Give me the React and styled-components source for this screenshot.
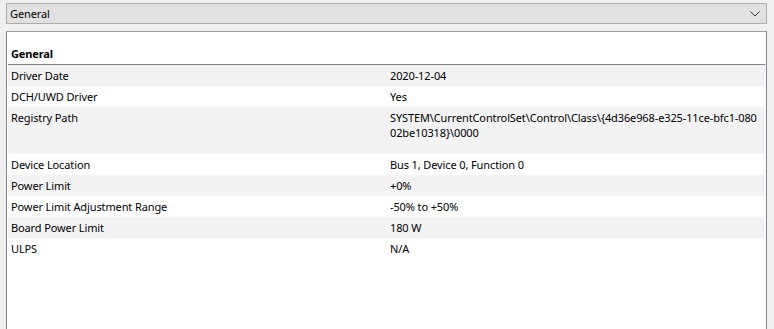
import React from 'react';
import styled, {createGlobalStyle} from 'styled-components';

const Global = createGlobalStyle`
  html, body {
    margin: 0;
    padding: 0;
    background: #f0f0f0;
    font-family: "Noto Sans", "Liberation Sans", sans-serif;
    font-size: 11px;
    letter-spacing: -0.12px;
    color: #000;
  }
`;

const Page = styled.div`
  width: 774px;
  height: 329px;
  overflow: hidden;
  padding: 3px 7px 0 6px;
  box-sizing: border-box;
  display: flex;
  flex-direction: column;
  gap: 7px;
`;

const Combo = styled.div`
  height: 21px;
  box-sizing: border-box;
  border: 1px solid #adadad;
  background: #e1e1e1;
  display: flex;
  align-items: center;
  justify-content: space-between;
  padding: 0 6px 0 3px;
`;

const Panel = styled.div`
  flex: 1;
  background: #fff;
  border: 1px solid #828790;
  border-top-color: #a0a0a0;
  border-bottom: none;
  padding: 0 1px;
`;

const Header = styled.div`
  height: 33px;
  box-sizing: border-box;
  border-bottom: 1px solid #828282;
  display: flex;
  align-items: flex-end;
  padding: 0 0 3px 3px;
  font-weight: bold;
`;

const Row = styled.div`
  display: grid;
  grid-template-columns: 379px 1fr;
  min-height: ${p => p.tall ? '47px' : '21px'};
  box-sizing: border-box;
  padding: ${p => p.tall ? '3px' : '0'} 0 0 3px;
  align-items: ${p => p.tall ? 'start' : 'center'};
  background: ${p => p.shade ? '#f3f3f3' : '#fff'};
  line-height: 15px;
`;

const Cell = styled.div`
  white-space: nowrap;
`;

const rows = [
  {label: 'Driver Date', value: '2020-12-04'},
  {label: 'DCH/UWD Driver', value: 'Yes'},
  {label: 'Registry Path', value: ['SYSTEM\\CurrentControlSet\\Control\\Class\\{4d36e968-e325-11ce-bfc1-080', '02be10318}\\0000'], tall: true},
  {label: 'Device Location', value: 'Bus 1, Device 0, Function 0'},
  {label: 'Power Limit', value: '+0%'},
  {label: 'Power Limit Adjustment Range', value: '-50% to +50%'},
  {label: 'Board Power Limit', value: '180 W'},
  {label: 'ULPS', value: 'N/A'},
];

export default function App() {
  return (
    <Page>
      <Global/>
      <Combo>
        <span>General</span>
        <svg width="10" height="6" viewBox="0 0 10 6">
          <path d="M0.5 0.5 L5 5 L9.5 0.5" fill="none" stroke="#333" strokeWidth="1"/>
        </svg>
      </Combo>
      <Panel>
        <Header>General</Header>
        {rows.map((r, i) => (
          <Row key={i} shade={i % 2 === 0} tall={r.tall}>
            <Cell>{r.label}</Cell>
            <Cell>
              {Array.isArray(r.value)
                ? r.value.map((l, j) => <div key={j}>{l}</div>)
                : r.value}
            </Cell>
          </Row>
        ))}
      </Panel>
    </Page>
  );
}
